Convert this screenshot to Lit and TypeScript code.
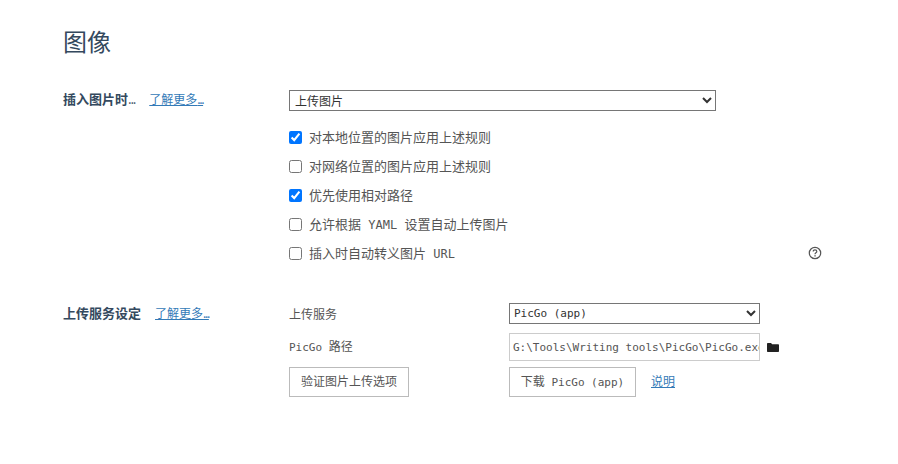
import {LitElement, css, html} from 'lit';
import {customElement} from 'lit/decorators.js';

const help = html`<svg class="help" viewBox="0 0 14 14" width="14" height="14">
  <circle cx="7" cy="7" r="5.7" fill="none" stroke="#555" stroke-width="1.2"></circle>
  <path d="M5.2 5.6c0-1.1.8-1.8 1.8-1.8s1.8.7 1.8 1.6c0 1.3-1.8 1.4-1.8 2.8" fill="none" stroke="#555" stroke-width="1.2"></path>
  <rect x="6.4" y="9.2" width="1.3" height="1.3" fill="#555"></rect>
</svg>`;

const folder = html`<svg class="folder" viewBox="0 0 12 9" width="12" height="9">
  <path d="M0 1C0 .4.4 0 1 0h3l1.200 1.200H11c.6 0 1 .4 1 1V8c0 .6-.4 1-1 1H1c-.6 0-1-.4-1-1z" fill="#222"></path>
</svg>`;

@customElement('app-root')
export class AppRoot extends LitElement {
  static styles = css`
    :host {
      display: block;
      width: 898px;
      height: 464px;
      background: #fff;
      color: #555;
      font-family: 'Noto Sans CJK SC', sans-serif;
      font-size: 12px;
      overflow: hidden;
    }

    .page {
      padding: 25px 0 0 63px;
    }

    h1 {
      margin: 0 0 33px;
      font-size: 24px;
      line-height: 32px;
      font-weight: 400;
      color: #34495e;
    }

    .section {
      display: grid;
      grid-template-columns: 226px 1fr;
    }

    .section + .section {
      margin-top: 41px;
    }

    .section + .section .heading {
      padding-top: 1px;
    }

    .heading {
      display: flex;
      align-items: baseline;
      gap: 14px;
      font-size: 13px;
      line-height: 18px;
      font-weight: 700;
      color: #34495e;
    }

    a {
      color: #337ab7;
      font-size: 12px;
      font-weight: 400;
      text-decoration: underline;
    }

    .dots {
      letter-spacing: -1.4px;
    }

    .heading-dots {
      font-weight: 400;
      letter-spacing: -1.2px;
    }

    select {
      box-sizing: border-box;
      height: 21px;
      padding: 0 0 2px 1px;
      border: 1px solid #767676;
      border-radius: 0;
      background: #fff;
      color: #333;
      font-size: 12px;
      font-family: 'Noto Sans CJK SC', sans-serif;
    }

    .main-select {
      display: block;
      width: 427px;
      margin-bottom: 17px;
    }

    .checks {
      display: flex;
      flex-direction: column;
      gap: 11px;
      width: 533px;
    }

    .check {
      display: flex;
      align-items: flex-start;
      gap: 7px;
      height: 18px;
      font-size: 13px;
      line-height: 17px;
    }

    .check input {
      width: 13px;
      height: 13px;
      margin: 2.5px 0 0;
    }

    .mono {
      font-family: 'DejaVu Sans Mono', monospace;
      font-size: 11px;
    }

    .check .mono {
      font-size: 12px;
    }

    .help {
      margin: 2px 0 0 auto;
    }

    .form {
      display: grid;
      grid-template-columns: 220px auto;
      row-gap: 9px;
      align-items: center;
    }

    .field {
      display: flex;
      align-items: center;
      gap: 7px;
    }

    .field select {
      width: 251px;
      padding: 0;
      font-family: 'DejaVu Sans Mono', monospace;
      font-size: 11px;
    }

    .field input {
      box-sizing: border-box;
      width: 251px;
      height: 28px;
      padding: 0 0 0 3px;
      border: 1px solid #ccc;
      color: #555;
      font-family: 'DejaVu Sans Mono', monospace;
      font-size: 11px;
      outline: none;
    }

    .path-label {
      margin-top: -3px;
    }

    button {
      box-sizing: border-box;
      height: 30px;
      padding: 0 0 4px;
      border: 1px solid #bbb;
      background: #fff;
      color: #555;
      font-family: 'Noto Sans CJK SC', sans-serif;
      font-size: 12px;
      white-space: nowrap;
    }

    .verify {
      width: 120px;
    }

    .download {
      width: 127px;
    }

    .field a {
      margin: 0 0 4px 8px;
    }

    .button-row {
      margin-top: -3px;
    }
  `;

  render() {
    return html`
      <div class="page">
        <h1>图像</h1>
        <div class="section">
          <div class="heading"><span>插入图片时<span class="heading-dots">...</span></span><a href="#">了解更多<span class="dots">...</span></a></div>
          <div>
            <select class="main-select"><option>上传图片</option></select>
            <div class="checks">
              <label class="check"><input type="checkbox" checked />对本地位置的图片应用上述规则</label>
              <label class="check"><input type="checkbox" />对网络位置的图片应用上述规则</label>
              <label class="check"><input type="checkbox" checked />优先使用相对路径</label>
              <label class="check"><input type="checkbox" /><span>允许根据<span class="mono"> YAML </span>设置自动上传图片</span></label>
              <label class="check"><input type="checkbox" /><span>插入时自动转义图片<span class="mono"> URL</span></span>${help}</label>
            </div>
          </div>
        </div>
        <div class="section">
          <div class="heading"><span>上传服务设定</span><a href="#">了解更多<span class="dots">...</span></a></div>
          <div class="form">
            <span>上传服务</span>
            <div class="field"><select><option>PicGo (app)</option></select></div>
            <span class="path-label"><span class="mono">PicGo </span>路径</span>
            <div class="field"><input value="G:\\Tools\\Writing tools\\PicGo\\PicGo.exe" />${folder}</div>
            <div class="button-row"><button class="verify">验证图片上传选项</button></div>
            <div class="field button-row"><button class="download">下载<span class="mono"> PicGo (app)</span></button><a href="#">说明</a></div>
          </div>
        </div>
      </div>
    `;
  }
}
